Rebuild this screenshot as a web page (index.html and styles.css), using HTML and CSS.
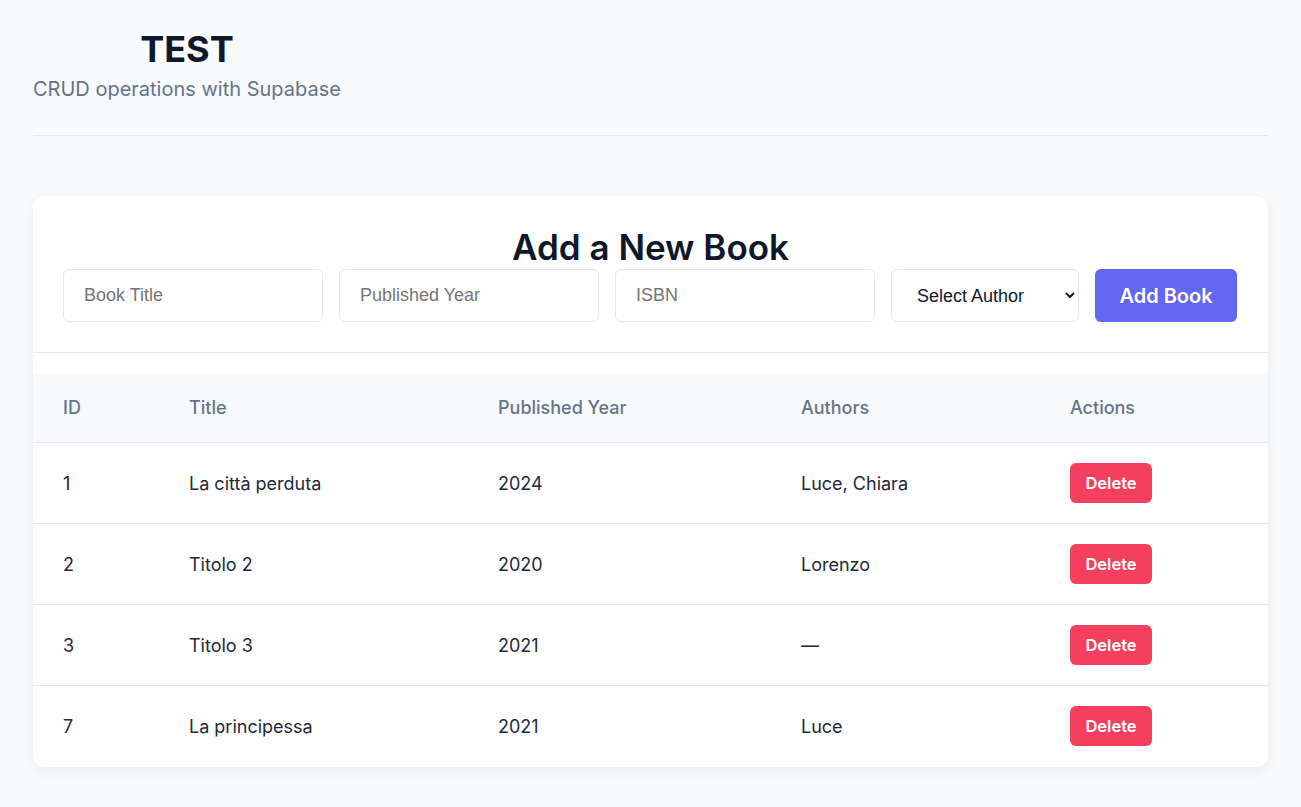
FILE: index.html
```html
<!DOCTYPE html>
<html lang="en">
<head>
<meta charset="utf-8">
<title>TEST</title>
<link rel="stylesheet" href="styles.css">
</head>
<body>
<div class="app">
  <header class="page-header">
    <div class="brand">
      <h1 class="brand-title">TEST</h1>
      <p class="brand-sub">CRUD operations with Supabase</p>
    </div>
  </header>

  <section class="card">
    <div class="form-area">
      <h2 class="form-title">Add a New Book</h2>
      <form class="book-form">
        <input class="field field-wide" type="text" placeholder="Book Title">
        <input class="field field-wide" type="text" placeholder="Published Year">
        <input class="field field-wide" type="text" placeholder="ISBN">
        <select class="field field-select">
          <option>Select Author</option>
        </select>
        <button type="button" class="btn-add">Add Book</button>
      </form>
    </div>

    <table class="books">
      <colgroup>
        <col class="c-id"><col class="c-title"><col class="c-year"><col class="c-authors"><col>
      </colgroup>
      <thead>
        <tr><th>ID</th><th>Title</th><th>Published Year</th><th>Authors</th><th>Actions</th></tr>
      </thead>
      <tbody>
        <tr><td>1</td><td>La città perduta</td><td>2024</td><td>Luce, Chiara</td><td><button type="button" class="btn-del">Delete</button></td></tr>
        <tr><td>2</td><td>Titolo 2</td><td>2020</td><td>Lorenzo</td><td><button type="button" class="btn-del">Delete</button></td></tr>
        <tr><td>3</td><td>Titolo 3</td><td>2021</td><td>—</td><td><button type="button" class="btn-del">Delete</button></td></tr>
        <tr><td>7</td><td>La principessa</td><td>2021</td><td>Luce</td><td><button type="button" class="btn-del">Delete</button></td></tr>
      </tbody>
    </table>
  </section>
</div>
</body>
</html>
```

FILE: styles.css
```css
* { box-sizing: border-box; }

body {
  margin: 0;
  background: #f8fafc;
  font-family: Inter, "Noto Sans", sans-serif;
  color: #0f172a;
}

.app {
  padding: 28px 33px 40px;
}

.page-header {
  padding-bottom: 31px;
  border-bottom: 1px solid #e2e8f0;
}

.brand {
  display: inline-block;
  text-align: center;
}

.brand-title {
  margin: 0;
  font-size: 36px;
  line-height: 43px;
  font-weight: 700;
  color: #0f172a;
}

.brand-sub {
  margin: 3px 0 0;
  font-size: 20px;
  line-height: 30px;
  color: #64748b;
}

.card {
  margin-top: 60px;
  background: #fff;
  border-radius: 12px;
  box-shadow: 0 4px 14px rgba(15, 23, 42, 0.06);
  overflow: hidden;
}

.form-area {
  padding: 32px 30px 30px;
  border-bottom: 1px solid #e2e8f0;
}

.form-title {
  margin: 0 0 3px;
  text-align: center;
  font-size: 35px;
  line-height: 38px;
  font-weight: 600;
  color: #0f172a;
}

.book-form {
  display: flex;
  align-items: center;
  gap: 16px;
}

.field {
  height: 53px;
  border: 1px solid #e2e8f0;
  border-radius: 6px;
  background: #fff;
  font-family: "Liberation Sans", Arial, sans-serif;
  font-size: 18px;
  color: #1e293b;
}

.field-wide {
  width: 260px;
  padding: 0 20px;
}

.field::placeholder {
  color: #757575;
}

.field-select {
  width: 188px;
  padding: 0 4px 0 21px;
  color: #0f172a;
}

.btn-add {
  width: 142px;
  height: 53px;
  border: 0;
  border-radius: 6px;
  background: #6366f1;
  color: #fff;
  font-family: Inter, sans-serif;
  font-size: 20px;
  font-weight: 600;
}

.books {
  width: 100%;
  margin-top: 20px;
  border-collapse: collapse;
  table-layout: fixed;
}

.c-id { width: 126px; }
.c-title { width: 309px; }
.c-year { width: 303px; }
.c-authors { width: 269px; }

.books th {
  background: #f8fafc;
  text-align: left;
  font-weight: 500;
  font-size: 18px;
  line-height: 21px;
  color: #64748b;
  padding: 24px 30px;
  border-bottom: 1px solid #e2e8f0;
}

.books td {
  font-size: 18px;
  line-height: 21px;
  color: #1e293b;
  padding: 20px 30px;
  height: 81px;
  border-bottom: 1px solid #e2e8f0;
}

.books tbody tr:last-child td {
  border-bottom: 0;
}

.btn-del {
  width: 82px;
  height: 40px;
  border: 0;
  border-radius: 6px;
  background: #f43f5e;
  color: #fff;
  font-family: Inter, sans-serif;
  font-size: 16.5px;
  font-weight: 600;
}
```
